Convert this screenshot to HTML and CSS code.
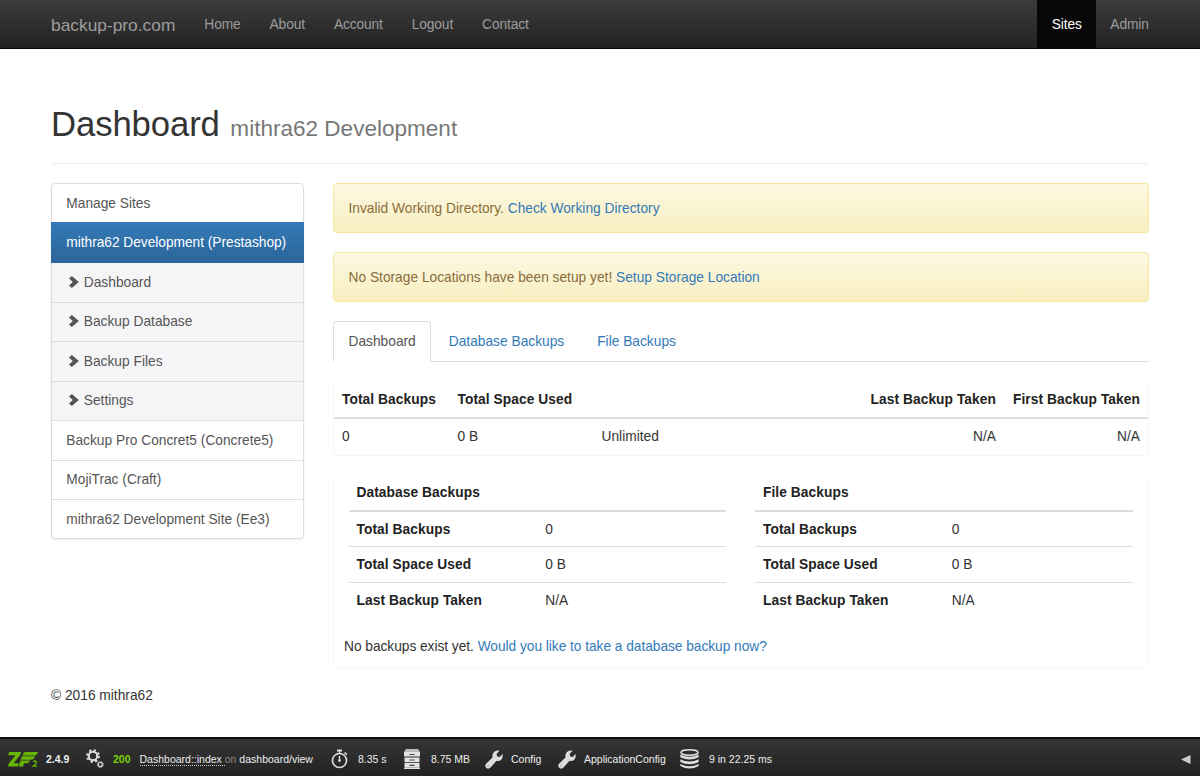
FILE: index.html
```html
<!DOCTYPE html>
<html lang="en">
<head>
    <meta charset="UTF-8">
    <meta name="viewport" content="width=device-width, initial-scale=1.0">
    <title>Dashboard - backup-pro.com</title>
    <link rel="stylesheet" href="styles.css">
</head>
<body>

<nav class="navbar">
    <a class="brand" href="#">backup-pro.com</a>
    <ul class="nav">
        <li><a href="#">Home</a></li>
        <li><a href="#">About</a></li>
        <li><a href="#">Account</a></li>
        <li><a href="#">Logout</a></li>
        <li><a href="#">Contact</a></li>
    </ul>
    <ul class="nav nav-right">
        <li class="active"><a href="#">Sites</a></li>
        <li><a href="#">Admin</a></li>
    </ul>
</nav>

<div class="container">
    <div class="page-header">
        <h1>Dashboard <small>mithra62 Development</small></h1>
    </div>

    <div class="row">
        <div class="list-group">
            <a href="#">Manage Sites</a>
            <a href="#" class="active">mithra62 Development (Prestashop)</a>
            <a href="#" class="sub"><svg class="chevron" viewBox="0 0 10 12"><path d="M0 2.600 2.800 0 9.800 6 2.800 12 0 9.400 3.800 6z"/></svg>Dashboard</a>
            <a href="#" class="sub"><svg class="chevron" viewBox="0 0 10 12"><path d="M0 2.600 2.800 0 9.800 6 2.800 12 0 9.400 3.800 6z"/></svg>Backup Database</a>
            <a href="#" class="sub"><svg class="chevron" viewBox="0 0 10 12"><path d="M0 2.600 2.800 0 9.800 6 2.800 12 0 9.400 3.800 6z"/></svg>Backup Files</a>
            <a href="#" class="sub"><svg class="chevron" viewBox="0 0 10 12"><path d="M0 2.600 2.800 0 9.800 6 2.800 12 0 9.400 3.800 6z"/></svg>Settings</a>
            <a href="#">Backup Pro Concret5 (Concrete5)</a>
            <a href="#">MojiTrac (Craft)</a>
            <a href="#">mithra62 Development Site (Ee3)</a>
        </div>

        <div class="content">
            <div class="alert">Invalid Working Directory. <a href="#">Check Working Directory</a></div>
            <div class="alert">No Storage Locations have been setup yet! <a href="#">Setup Storage Location</a></div>

            <ul class="tabs">
                <li class="active"><a href="#">Dashboard</a></li>
                <li><a href="#">Database Backups</a></li>
                <li><a href="#">File Backups</a></li>
            </ul>

            <div class="panel summary">
                <table>
                    <thead>
                        <tr>
                            <th class="col-count">Total Backups</th>
                            <th class="col-space">Total Space Used</th>
                            <th></th>
                            <th class="col-date">Last Backup Taken</th>
                            <th class="col-date">First Backup Taken</th>
                        </tr>
                    </thead>
                    <tbody>
                        <tr>
                            <td>0</td>
                            <td>0 B</td>
                            <td>Unlimited</td>
                            <td class="col-date">N/A</td>
                            <td class="col-date">N/A</td>
                        </tr>
                    </tbody>
                </table>
            </div>

            <div class="panel details">
                <div class="detail-tables">
                    <table>
                        <thead><tr><th colspan="2">Database Backups</th></tr></thead>
                        <tbody>
                            <tr><th>Total Backups</th><td>0</td></tr>
                            <tr><th>Total Space Used</th><td>0 B</td></tr>
                            <tr><th>Last Backup Taken</th><td>N/A</td></tr>
                        </tbody>
                    </table>
                    <table>
                        <thead><tr><th colspan="2">File Backups</th></tr></thead>
                        <tbody>
                            <tr><th>Total Backups</th><td>0</td></tr>
                            <tr><th>Total Space Used</th><td>0 B</td></tr>
                            <tr><th>Last Backup Taken</th><td>N/A</td></tr>
                        </tbody>
                    </table>
                </div>
                <p class="empty">No backups exist yet. <a href="#">Would you like to take a database backup now?</a></p>
            </div>
        </div>
    </div>

    <footer>&copy; 2016 mithra62</footer>
</div>

<!-- developer toolbar -->
<div class="toolbar">
    <div class="tool tool-zf">
        <svg class="logo" width="31" height="17" viewBox="0 0 31 17">
            <path d="M1 1h12l-.8 3-6.700 8.300h5.300L10 15.500H0l.8-3L7.500 4.200H.3z"/>
            <path d="M17 1h13c-.8 2.500-2 3.600-4 3.600H14.500Q15 2 17 1zM14 5.300h13c-.8 2.500-2 3.400-4 3.400H12.700zM12.500 9.400H22c-.8 2-2 2.900-4 2.900h-2l-1 3.200h-4.200z"/>
            <path class="two" d="M25.200 10.800q2-1.500 3.200 0 .5 1.300-3.200 4.300h4"/>
        </svg>
        <b>2.4.9</b>
    </div>
    <div class="tool tool-request">
        <svg width="19" height="20" viewBox="0 0 19 20">
            <circle cx="7" cy="7" r="4.200" fill="none" stroke="#ddd" stroke-width="2"/>
            <circle cx="7" cy="7" r="5.900" fill="none" stroke="#ddd" stroke-width="2" stroke-dasharray="2.300 2.330"/>
            <circle cx="14.300" cy="15.500" r="2.100" fill="none" stroke="#ccc" stroke-width="1.400"/>
            <circle cx="14.300" cy="15.500" r="3" fill="none" stroke="#ccc" stroke-width="1" stroke-dasharray="1.200 1.150"/>
        </svg>
        <b class="status">200</b>
        <span><span class="route">Dashboard::index </span><span class="on">on</span> dashboard/view</span>
    </div>
    <div class="tool tool-time">
        <svg width="18" height="20" viewBox="0 0 18 20">
            <circle cx="8.500" cy="11.500" r="7" fill="none" stroke="#ddd" stroke-width="1.600"/>
            <path d="M6 .5h5v2H6zM7.800 2h1.400v3H7.800zM14 3l2.500 2-1 1.300L13 4.300zM7.800 7h1.400v3l.8 1.500-1.500 2-1.500-2 .8-1.500z" fill="#ddd"/>
        </svg>
        <span>8.35 s</span>
    </div>
    <div class="tool tool-memory">
        <svg width="16" height="20" viewBox="0 0 16 20">
            <path d="M2 0h12l2 3H0z" fill="#bbb"/>
            <path d="M0 3h16v4.600H0zM.5 8.500h15v4.700H.5zM.5 14h15v4.200H.5zM0 18.500h16V20H0z" fill="#e2e2e2"/>
            <path d="M5.500 5.500h5M5.500 11h5M5.500 16.300h5" fill="none" stroke="#444" stroke-width="1.200"/>
        </svg>
        <span>8.75 MB</span>
    </div>
    <div class="tool tool-config">
        <svg width="18" height="19" viewBox="0 0 18 19">
            <path d="M9 2Q11.500 0 14.500.7L11.500 4l.8 2.500 2.400.5L17.500 4q.8 4-1.500 6-2 1.500-4.500.8L5.500 17.600Q3.300 19.700 1.200 17.800-.7 15.700 1.100 13.700L7.500 7.500Q6.800 4 9 2z" fill="#ddd"/>
            <circle cx="3.200" cy="15.800" r=".8" fill="#999"/>
        </svg>
        <span>Config</span>
    </div>
    <div class="tool tool-appconfig">
        <svg width="18" height="19" viewBox="0 0 18 19">
            <path d="M9 2Q11.500 0 14.500.7L11.500 4l.8 2.500 2.400.5L17.500 4q.8 4-1.500 6-2 1.500-4.500.8L5.500 17.600Q3.300 19.700 1.200 17.800-.7 15.700 1.100 13.700L7.500 7.500Q6.800 4 9 2z" fill="#ddd"/>
            <circle cx="3.200" cy="15.800" r=".8" fill="#999"/>
        </svg>
        <span>ApplicationConfig</span>
    </div>
    <div class="tool tool-db">
        <svg width="19" height="20" viewBox="0 0 19 20">
            <ellipse cx="9.500" cy="3.500" rx="8.500" ry="2.700" fill="none" stroke="#e2e2e2" stroke-width="1.500"/>
            <path d="M.3 5.500q9.200 4.500 18.400 0v2.700q-9.200 4.500-18.400 0zM.3 10.300q9.200 4.500 18.400 0V13q-9.200 4.500-18.400 0zM.3 15q9.200 4.500 18.400 0v2q-9.200 5-18.400 0z" fill="#ddd"/>
        </svg>
        <span>9 in 22.25 ms</span>
    </div>
    <a class="toggle" href="#"><svg width="10" height="9" viewBox="0 0 10 9"><path d="M0 4.500 9.500 0v9z" fill="#ccc"/></svg></a>
</div>

</body>
</html>
```

FILE: styles.css
```css
* {
    box-sizing: border-box;
}
body {
    font-family: "Liberation Sans", Arial, sans-serif;
    font-size: 13.76px;
    line-height: 19px;
    color: #333;
    background-color: #fff;
    margin: 0;
    height: 776px;
    display: flex;
    flex-direction: column;
    overflow: hidden;
}
a {
    color: #337ab7;
    text-decoration: none;
}
ul {
    list-style: none;
    margin: 0;
    padding: 0;
}

/* top bar */
.navbar {
    display: flex;
    height: 49px;
    flex-shrink: 0;
    padding: 0 37px 0 51px;
    background: linear-gradient(#3c3c3c, #222);
    border-bottom: 1px solid #080808;
}
.navbar a {
    display: block;
    padding: 0 14.5px;
    line-height: 49px;
    color: #9d9d9d;
}
.navbar .brand {
    font-size: 17.35px;
    line-height: 50px;
    padding: 0 14.5px 0 0;
}
.nav {
    display: flex;
    letter-spacing: -0.12px;
}
.nav-right {
    margin-left: auto;
}
.nav-right a {
    padding: 0 14.3px;
}
.nav .active a {
    height: 48px;
    color: #fff;
    background-color: #080808;
}

.container {
    width: 1098px;
    margin-left: 51px;
    flex: 1;
}
.page-header {
    height: 115px;
    padding-top: 56px;
    border-bottom: 1px solid #eee;
    margin-bottom: 19px;
}
h1 {
    font-size: 34.7px;
    line-height: 38px;
    font-weight: normal;
    letter-spacing: -0.1px;
    margin: 0;
}
h1 small {
    font-size: 22.55px;
    letter-spacing: 0;
    margin-left: 1px;
    color: #777;
}
.row {
    display: flex;
    align-items: flex-start;
    gap: 29px;
}

/* sidebar */
.list-group {
    width: 253px;
    flex-shrink: 0;
    border: 1px solid #ddd;
    border-radius: 4px;
    box-shadow: 0 1px 2px rgba(0,0,0,0.075);
}
.list-group a {
    display: flex;
    align-items: center;
    height: 39.5px;
    padding: 0 14.3px;
    color: #555;
    border-bottom: 1px solid #ddd;
}
.list-group a:first-child {
    height: 39px;
}
.list-group a:last-child {
    border-bottom: 0;
    height: 38px;
}
.list-group .active {
    color: #fff;
    height: 41px;
    margin: -1px -1px 0;
    padding: 0 15.3px;
    letter-spacing: -0.03px;
    background: linear-gradient(#337ab7, #2b669a);
    border-bottom: 1px solid #2b669a;
}
.list-group .sub {
    background-color: #f5f5f7;
}
.chevron {
    width: 10px;
    height: 12px;
    margin: 0 4.5px 1px 3px;
    fill: #555;
}

/* main column */
.content {
    width: 816px;
}
.alert {
    height: 50px;
    padding: 15px 14.5px;
    margin-bottom: 19px;
    color: #8a6d3b;
    background: linear-gradient(#fcf8e3, #f8efc0);
    border: 1px solid #f5e79e;
    border-radius: 4px;
}
.tabs {
    display: flex;
    height: 41px;
    border-bottom: 1px solid #ddd;
    margin-bottom: 18px;
}
.tabs a {
    display: block;
    height: 41px;
    line-height: 42px;
    padding: 0 15.5px;
    margin-right: 2px;
}
.tabs .active a {
    color: #555;
    padding: 0 14.5px;
    background-color: #fff;
    border: 1px solid #ddd;
    border-bottom-color: #fff;
    border-radius: 4px 4px 0 0;
    line-height: 40px;
}
.panel {
    border: 1px solid #f7f7f7;
    border-top-color: #fcfcfc;
    border-radius: 4px;
}
table {
    width: 100%;
    border-collapse: collapse;
    table-layout: fixed;
}
th, td {
    padding: 0 8px;
    height: 35.7px;
    text-align: left;
    border-bottom: 1px solid #ddd;
}
th {
    color: #222;
    letter-spacing: 0.07px;
}
thead th {
    border-bottom: 2px solid #ddd;
}
tbody tr:last-child > * {
    border-bottom: 0;
}
.summary {
    height: 76px;
    margin-bottom: 20px;
}
.summary thead th {
    height: 37px;
}
.col-count {
    width: 115.5px;
}
.col-space {
    width: 144px;
}
.col-date {
    width: 144px;
    text-align: right;
}
.details {
    height: 192px;
}
.detail-tables {
    display: flex;
    gap: 29px;
    padding: 0 14px 0 14.5px;
}
.details thead th {
    height: 34px;
    padding-bottom: 2px;
}
.details table {
    width: 377.5px;
}
.empty {
    margin: 19px 10px 0;
    letter-spacing: -0.04px;
}
footer {
    margin-top: 18px;
}

/* developer toolbar */
.toolbar {
    display: flex;
    align-items: center;
    height: 39px;
    flex-shrink: 0;
    padding: 3px 9px 0 8px;
    font-size: 10.5px;
    color: #eee;
    background: linear-gradient(#353535, #222);
    border-top: 2px solid #111;
}
.tool {
    display: flex;
    align-items: center;
    white-space: nowrap;
}
.tool svg {
    flex-shrink: 0;
}
.tool-zf {
    width: 78px;
    gap: 7px;
}
.logo {
    fill: #68b604;
}
.logo .two {
    fill: none;
    stroke: #68b604;
    stroke-width: 1.3;
}
.tool-request {
    width: 245px;
    gap: 8px;
}
.status {
    color: #7bd309;
    margin-right: 1px;
}
.route {
    border-bottom: 1px dotted #ccc;
}
.on {
    color: #888;
}
.tool-time {
    width: 73px;
    gap: 9px;
}
.tool-memory {
    width: 81px;
    gap: 11px;
}
.tool-config {
    width: 73px;
    gap: 8px;
}
.tool-appconfig {
    width: 122px;
    gap: 8px;
}
.tool-db {
    gap: 10px;
}
.toggle {
    margin-left: auto;
    display: flex;
}
```
